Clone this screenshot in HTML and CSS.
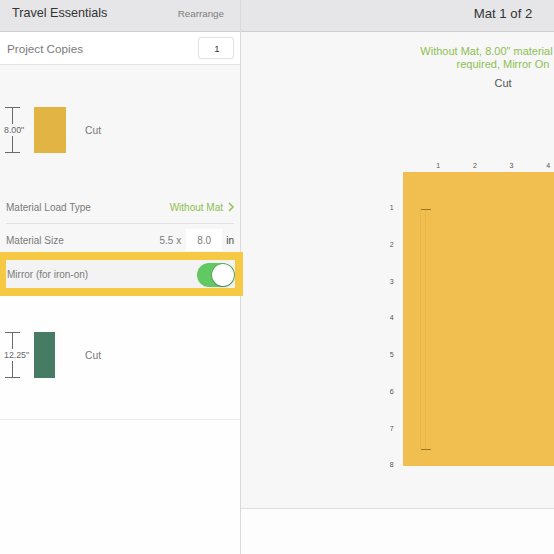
FILE: index.html
```html
<!DOCTYPE html>
<html>
<head>
<meta charset="utf-8">
<link rel="stylesheet" href="styles.css">
</head>
<body>
<div class="app">
  <aside class="left">
    <header class="bar left-bar">
      <span class="title">Travel Essentials</span>
      <span class="rearrange">Rearrange</span>
    </header>
    <div class="copies">
      <span class="copies-label">Project Copies</span>
      <div class="num-box">1</div>
    </div>
    <section class="item item-a">
      <div class="shape-row">
        <div class="dim">
          <span class="cap"></span><span class="vline"></span>
          <span class="dim-text">8.00"</span>
          <span class="vline"></span><span class="cap"></span>
        </div>
        <div class="swatch-cell"><div class="swatch swatch-a"></div></div>
        <span class="cut">Cut</span>
      </div>
      <div class="setting load">
        <span>Material Load Type</span>
        <span class="green">Without Mat <svg class="chev" width="6" height="10" viewBox="0 0 6 10"><path d="M1 1 L5 5 L1 9" fill="none" stroke="#8dc050" stroke-width="1.5"/></svg></span>
      </div>
      <div class="setting size">
        <span>Material Size</span>
        <span class="size-vals"><span class="dimx">5.5 x</span><span class="size-box">8.0</span><span class="unit">in</span></span>
      </div>
      <div class="setting mirror">
        <span>Mirror (for iron-on)</span>
        <span class="toggle"><span class="knob"></span></span>
      </div>
    </section>
    <section class="item item-b">
      <div class="shape-row">
        <div class="dim">
          <span class="cap"></span><span class="vline"></span>
          <span class="dim-text">12.25"</span>
          <span class="vline"></span><span class="cap"></span>
        </div>
        <div class="swatch-cell"><div class="swatch swatch-b"></div></div>
        <span class="cut">Cut</span>
      </div>
    </section>
  </aside>
  <main class="right">
    <header class="bar right-bar"><span class="mat-title">Mat 1 of 2</span></header>
    <div class="canvas">
      <p class="msg">Without Mat, 8.00" material length<br>required, Mirror On</p>
      <p class="canvas-cut">Cut</p>
      <div class="mat-wrap">
        <div></div>
        <div class="col-labels">
          <span>1</span><span>2</span><span>3</span><span>4</span><span>5</span><span>6</span><span>7</span><span>8</span><span>9</span><span>10</span><span>11</span><span>12</span>
        </div>
        <div class="row-labels">
          <span>1</span><span>2</span><span>3</span><span>4</span><span>5</span><span>6</span><span>7</span><span>8</span>
        </div>
        <div class="mat">
          <div class="cutline"></div>
          <div class="dash dash-top"></div>
          <div class="dash dash-bottom"></div>
        </div>
      </div>
    </div>
    <div class="bottom-bar"></div>
  </main>
</div>
</body>
</html>
```

FILE: styles.css
```css
* { box-sizing: border-box; }
html, body {
  margin: 0;
  padding: 0;
  width: 554px;
  height: 554px;
  overflow: hidden;
  font-family: "Liberation Sans", Arial, sans-serif;
  background: #ffffff;
}
.app {
  display: flex;
  width: 554px;
  height: 554px;
  overflow: hidden;
}
.left {
  flex: 0 0 241px;
  width: 241px;
  border-right: 1px solid #d9d9db;
  background: #fefefe;
  display: flex;
  flex-direction: column;
  position: relative;
  z-index: 2;
}
.right {
  flex: 0 0 524px;
  width: 524px;
  display: flex;
  flex-direction: column;
  position: relative;
  z-index: 1;
}
.bar {
  height: 32px;
  background: #e6e6e8;
  border-bottom: 1px solid #cfcfd1;
  display: flex;
  align-items: center;
  padding-bottom: 5px;
}
.left-bar {
  justify-content: space-between;
  padding-left: 12px;
  padding-right: 16px;
}
.title {
  font-size: 12.6px;
  color: #333;
}
.rearrange {
  font-size: 9.8px;
  color: #7d7d7d;
}
.right-bar { justify-content: center; }
.mat-title {
  font-size: 13.2px;
  color: #333;
}

.copies {
  height: 33px;
  background: #fff;
  border-bottom: 1px solid #e4e4e6;
  display: flex;
  align-items: center;
  justify-content: space-between;
  padding: 0 6px 0 7px;
}
.copies-label {
  font-size: 11.7px;
  color: #7a7a7a;
}
.num-box {
  width: 36px;
  height: 22px;
  border: 1px solid #e2e2e4;
  border-radius: 3px;
  background: #fff;
  font-size: 9.5px;
  color: #333;
  display: flex;
  align-items: center;
  justify-content: center;
  padding-left: 2px;
}

.item-a {
  background: #f7f7f7;
  padding-bottom: 8px;
}
.item-b {
  height: 124px;
  padding-top: 36px;
  background: #fefefe;
  border-bottom: 1px solid #ececec;
}
.item-a .shape-row {
  height: 130px;
}
.shape-row {
  display: flex;
  align-items: center;
  padding-left: 4px;
}
.dim {
  width: 30px;
  height: 46px;
  display: flex;
  flex-direction: column;
  align-items: flex-start;
}
.cap {
  display: block;
  width: 15px;
  height: 1px;
  margin-left: 1px;
  background: #6a6a6a;
}
.vline {
  display: block;
  flex: 1;
  width: 1px;
  margin-left: 8px;
  background: #6a6a6a;
}
.dim-text {
  font-size: 8.8px;
  line-height: 12px;
  color: #666;
  white-space: nowrap;
}
.swatch-cell {
  width: 51px;
  display: flex;
}
.swatch { height: 46px; }
.swatch-a { width: 32px; background: #e2b444; }
.swatch-b { width: 21px; background: #467c64; }
.cut {
  font-size: 10.3px;
  color: #777;
}

.setting {
  display: flex;
  align-items: center;
  justify-content: space-between;
  margin: 0 6px;
  font-size: 10px;
  color: #7a7a7a;
}
.load {
  height: 29px;
  padding-bottom: 4px;
  border-bottom: 1px solid #e1e1e3;
}
.green {
  color: #8dc050;
  display: flex;
  align-items: center;
  gap: 5px;
}
.size { height: 32px; }
.size-vals {
  display: flex;
  align-items: center;
}
.dimx { margin-right: 5px; }
.size-box {
  width: 36px;
  height: 22px;
  background: #fff;
  display: flex;
  align-items: center;
  justify-content: center;
}
.unit {
  margin-left: 4px;
  color: #444;
}
.mirror {
  margin-top: 4px;
  height: 28px;
  padding-left: 1px;
  padding-right: 0;
  width: 229px;
  background: #f3f3f3;
  outline: 8px solid #f6c944;
}
.toggle {
  width: 38px;
  height: 24px;
  border-radius: 12px;
  background: #62c864;
  position: relative;
  margin-top: 2px;
}
.knob {
  position: absolute;
  right: 1px;
  top: 1px;
  width: 22px;
  height: 22px;
  border-radius: 50%;
  background: #fff;
  box-shadow: 0 0 0 0.5px rgba(0,0,0,0.25), 0 1px 2px rgba(0,0,0,0.2);
}

.canvas {
  height: 476px;
  background: #f7f7f7;
  padding-top: 13px;
}
.msg {
  margin: 0;
  text-align: center;
  font-size: 11px;
  line-height: 13px;
  color: #8dbf52;
  white-space: nowrap;
}
.canvas-cut {
  margin: 6px 0 0;
  text-align: center;
  font-size: 11px;
  line-height: 13px;
  color: #555;
}
.mat-wrap {
  margin-top: 70px;
  margin-left: 144px;
  display: grid;
  grid-template-columns: 17.5px 460px;
  grid-template-rows: 12px 294px;
}
.col-labels {
  display: flex;
  padding-left: 18.35px;
}
.col-labels span, .row-labels span {
  font-size: 7px;
  color: #555;
  text-align: center;
}
.col-labels span {
  flex: 0 0 36.7px;
  line-height: 12px;
  padding-right: 2px;
}
.row-labels {
  display: flex;
  flex-direction: column;
  padding-top: 18.35px;
}
.row-labels span {
  flex: 0 0 36.7px;
  line-height: 36.7px;
  padding-right: 4px;
}
.mat {
  position: relative;
  background: #f0bf4f;
  height: 293.6px;
}
.cutline {
  position: absolute;
  left: 17.5px;
  top: 37px;
  width: 6px;
  height: 240px;
  border-left: 1px solid rgba(170, 120, 20, 0.1);
  border-right: 1px solid rgba(170, 120, 20, 0.1);
}
.dash {
  position: absolute;
  left: 18.5px;
  width: 10px;
  height: 1px;
  background: #9c7428;
}
.dash-top { top: 37px; }
.dash-bottom { top: 277px; }
.bottom-bar {
  flex: 1;
  background: #fdfdfd;
  border-top: 1px solid #dedede;
}
```
